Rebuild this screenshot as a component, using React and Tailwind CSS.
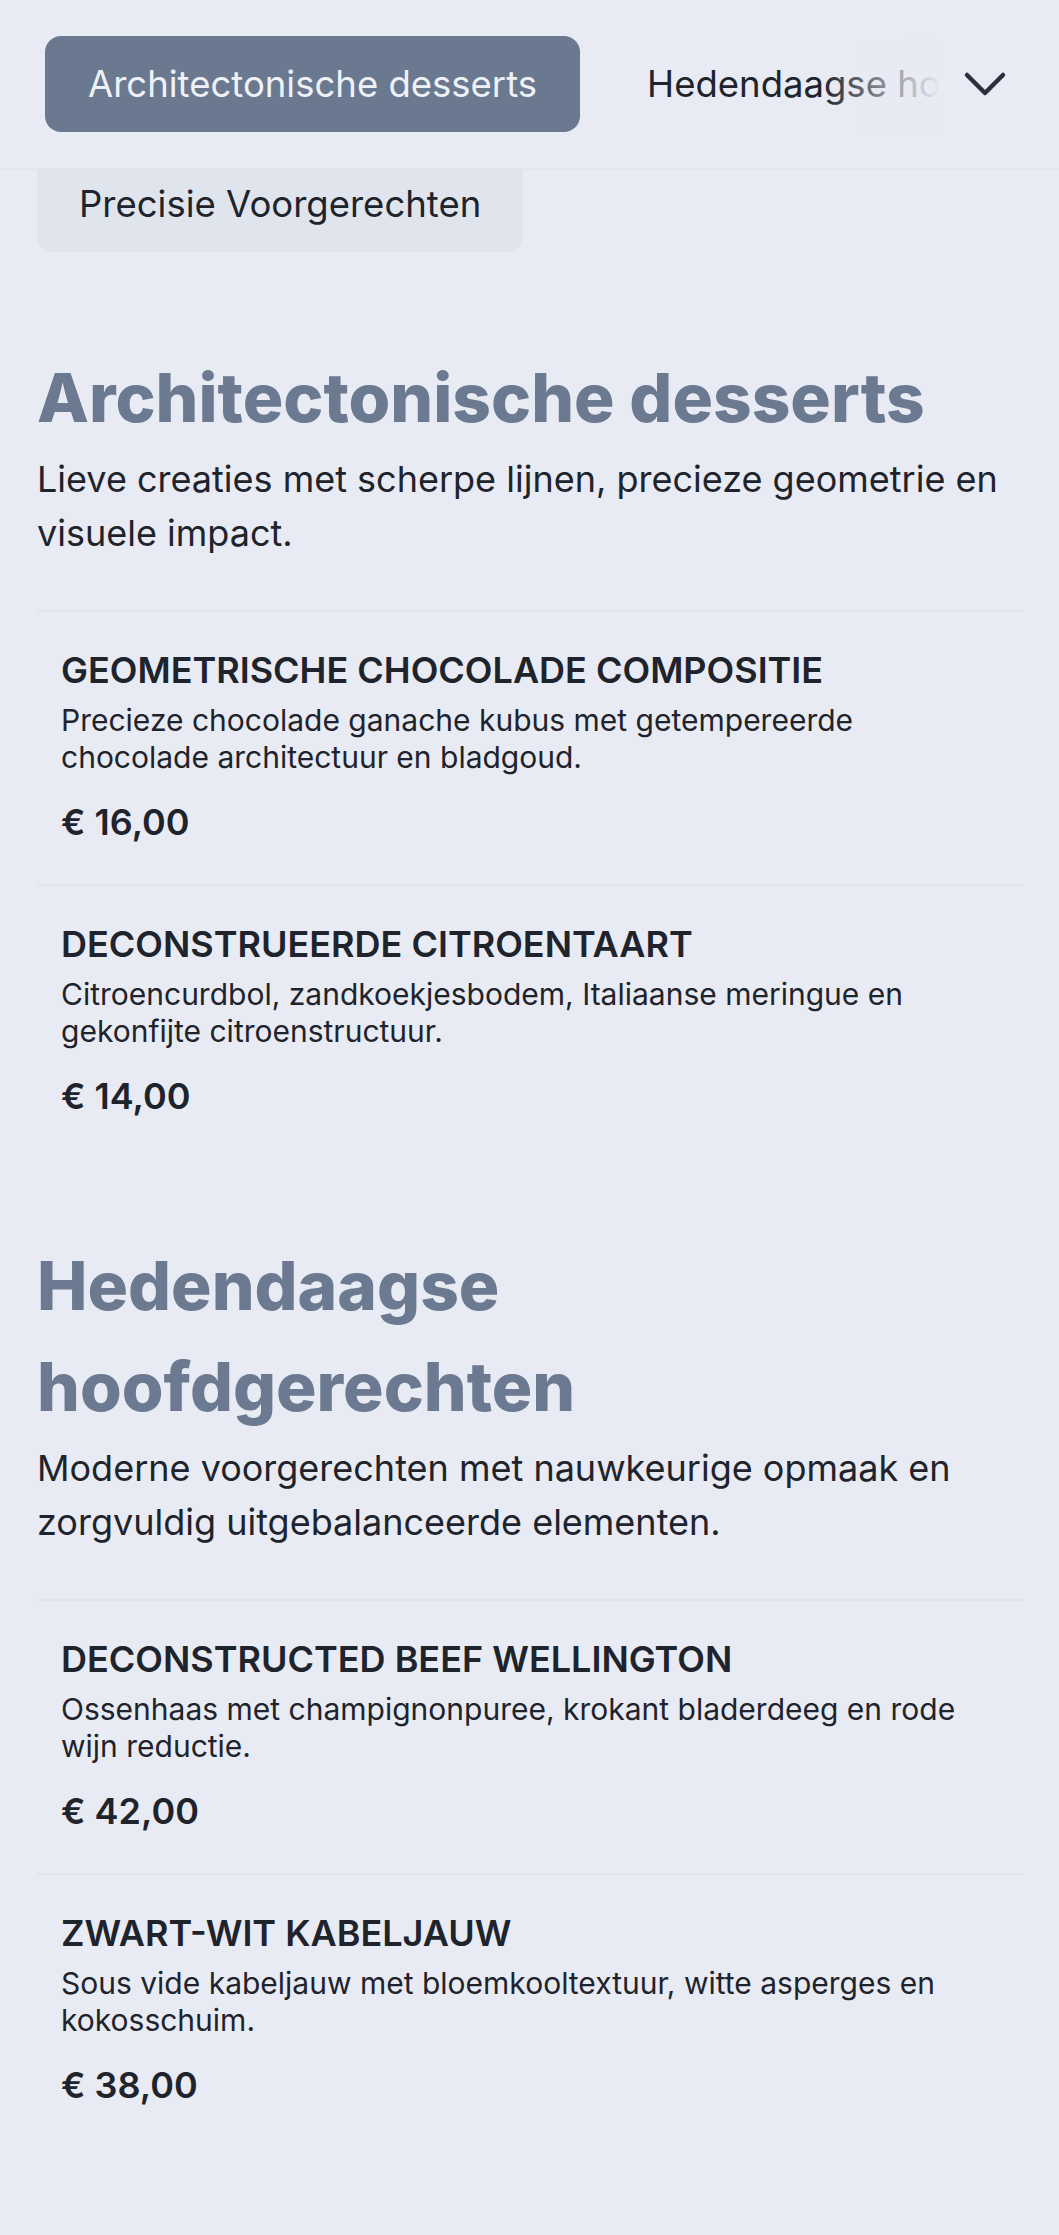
const SECTIONS = [
  {
    id: "desserts",
    title: "Architectonische desserts",
    description: "Lieve creaties met scherpe lijnen, precieze geometrie en visuele impact.",
    items: [
      {
        name: "Geometrische chocolade compositie",
        description: "Precieze chocolade ganache kubus met getempereerde chocolade architectuur en bladgoud.",
        price: 16,
      },
      {
        name: "Deconstrueerde citroentaart",
        description: "Citroencurdbol, zandkoekjesbodem, Italiaanse meringue en gekonfijte citroenstructuur.",
        price: 14,
      },
    ],
  },
  {
    id: "hoofdgerechten",
    title: "Hedendaagse hoofdgerechten",
    description: "Moderne voorgerechten met nauwkeurige opmaak en zorgvuldig uitgebalanceerde elementen.",
    items: [
      {
        name: "Deconstructed beef wellington",
        description: "Ossenhaas met champignonpuree, krokant bladerdeeg en rode wijn reductie.",
        price: 42,
      },
      {
        name: "Zwart-wit kabeljauw",
        description: "Sous vide kabeljauw met bloemkooltextuur, witte asperges en kokosschuim.",
        price: 38,
      },
    ],
  },
];

const euro = (n) => "€ " + n.toFixed(2).replace(".", ",");

function ChevronDown() {
  return (
    <svg width="44" height="26" viewBox="0 0 44 26" fill="none" stroke="#2a303b" strokeWidth="4.5" strokeLinecap="round" strokeLinejoin="round">
      <polyline points="4,4 22,22 40,4" />
    </svg>
  );
}

function Header() {
  return (
    <header className="relative z-10 flex items-center gap-[22px] border-b-2 border-[#e1e5ed] bg-[#e8ebf3] py-[36px] pl-[45px] pr-[52px]">
      <nav className="relative min-w-0 flex-1 overflow-hidden">
        <div className="flex gap-[24px] whitespace-nowrap">
          <button className="h-[96px] shrink-0 rounded-2xl bg-[#6a798f] px-[43px] text-[36.5px] text-[#eef2f8]">
            Architectonische desserts
          </button>
          <button className="h-[96px] shrink-0 rounded-2xl px-[43px] text-[36.5px] text-[#1e232c]">
            Hedendaagse hoofdgerechten
          </button>
        </div>
        <div className="pointer-events-none absolute inset-y-0 right-0 w-[120px] bg-gradient-to-r from-[#e8ebf3]/0 to-[#e8ebf3]" />
      </nav>
      <button className="shrink-0">
        <ChevronDown />
      </button>
    </header>
  );
}

function MenuItem({ item }) {
  return (
    <li className="border-t-2 border-[#dfe3eb] px-[24px] pb-[38px] pt-[33px]">
      <h3 className="text-[36px] font-semibold uppercase leading-[50px] text-[#1e232c]">{item.name}</h3>
      <p className="mt-[7px] text-[30px] leading-[37px] text-[#1e232c]">{item.description}</p>
      <p className="mt-[22px] text-[36px] font-semibold leading-[48px] text-[#1e232c]">{euro(item.price)}</p>
    </li>
  );
}

export default function App() {
  return (
    <div className="min-h-screen bg-[#e8ebf3] font-['Inter',sans-serif]">
      <Header />
      <main className="px-[37px] pb-[88px]">
        <div className="-mt-[14px] mb-[18px] flex">
          <span className="flex h-[96px] items-center rounded-2xl bg-[#e0e5ed] px-[42px] text-[36.5px] text-[#1e232c]">
            Precisie Voorgerechten
          </span>
        </div>
        {SECTIONS.map((s) => (
          <section key={s.id} className="pt-[77px]">
            <h2 className="text-[67.5px] font-extrabold leading-[101px] text-[#6b7a90]">{s.title}</h2>
            <p className="mt-[4px] text-[36px] leading-[54px] text-[#1e232c]">{s.description}</p>
            <ul className="mt-[50px]">
              {s.items.map((it) => (
                <MenuItem key={it.name} item={it} />
              ))}
            </ul>
          </section>
        ))}
      </main>
    </div>
  );
}
